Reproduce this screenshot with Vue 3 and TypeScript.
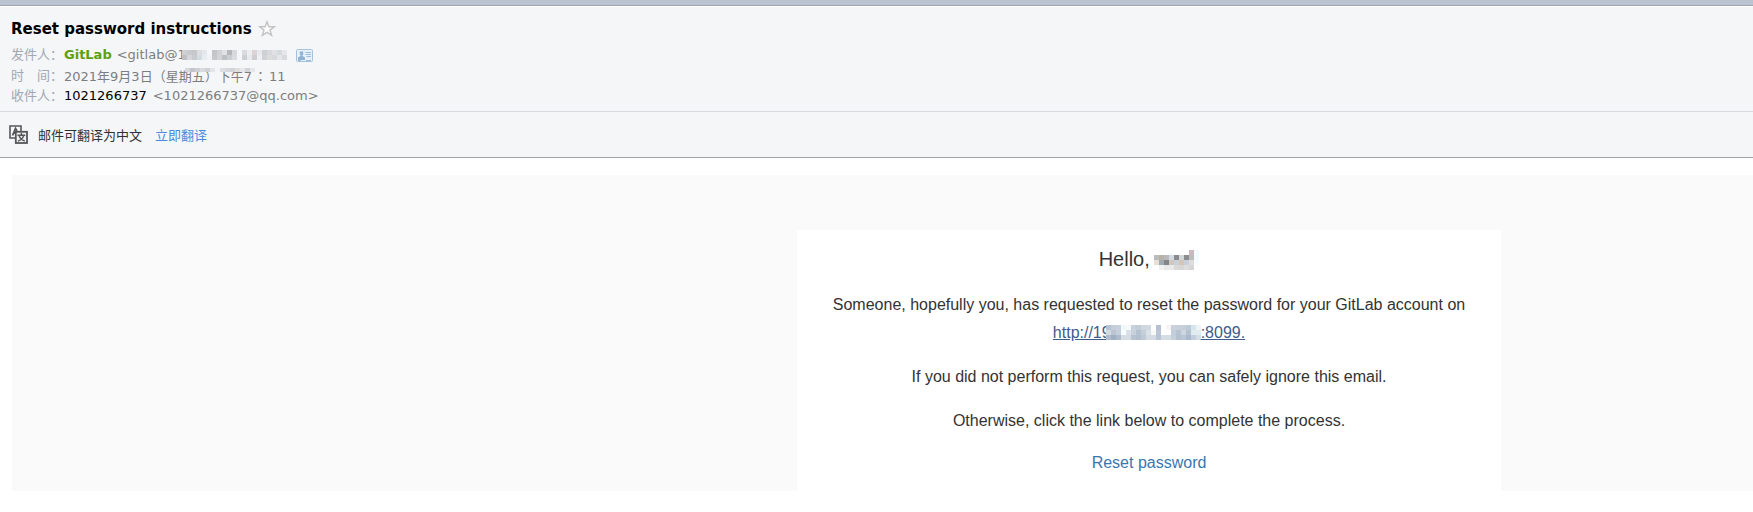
<script setup lang="ts">
interface Row {
  y: number
  start: number
  colors: string[]
}

const addressRows: Row[] = [
  { y: 0, start: 0, colors: ['#cfd0d2', '#c9cacc', '#c6c7c9', '#dcdee0', '#e4e8ec', '#f4f6f9', '#c3c5c7', '#d0d2d4', '#dfe1e3', '#b5b6b8', '#d7dadd', '#f4f6f9', '#d9dbde', '#ebedf0', '#dbd5d5', '#e7e9ec', '#ccd0d3', '#d7d8da', '#dfe1e3', '#d5dadd', '#e6e7ea'] },
  { y: 5, start: 0, colors: ['#c0c1c4', '#d3d6da', '#c8cbcf', '#d4dce3', '#e8edf2', '#f0f2f4', '#c7c8cb', '#d2d4d7', '#bcbfc3', '#cbced1', '#d8dcdf', '#f4f6f9', '#cfcfd1', '#e6e9ed', '#d0cccf', '#eeeff1', '#cfd2d7', '#dcdcdc', '#d7dadd', '#e4e6e9', '#d8dade'] },
]
const dateRows: Row[] = [
  { y: 0, start: 1, colors: ['#d6d8dc', '#c2c5cb', '#cecfd2', '#d8dadd', '#cfd1d4', '#e2e4e7', '#f4f5f7', '#dcdfe2', '#d7d8db', '#d1d4d9', '#e3dddc', '#e6e8eb', '#d2d4d7', '#e5e7ea'] },
]
const nameRows: Row[] = [
  { y: 0, start: 7, colors: ['#cbb8be', '#f4fbff'] },
  { y: 5, start: 0, colors: ['#bcbcbc', '#b9b2a7', '#b9babd', '#d3dce5', '#8b8b8d', '#d1d6da', '#8c8c8f', '#bcbcbd', '#f4fbff'] },
  { y: 10, start: 0, colors: ['#eadfd3', '#9eabb5', '#858588', '#d0c8be', '#c8d0d9', '#d3c6b8', '#c8d0da', '#dedcdd', '#f7fcff'] },
  { y: 15, start: 1, colors: ['#f2f2f2', '#e9e9e9', '#e9e9e9', '#dadada', '#d7d7d7', '#dedede', '#d5d5d5'] },
]
const hostRows: Row[] = [
  { y: 0, start: 0, colors: ['#b7c3d2', '#c3ced9', '#c9d2dc', '#eff8fb', '#f7f8f8', '#c7d0dd', '#c2ccd7', '#d0d7df', '#d0d9e2', '#ffffff', '#b5c0d0', '#ffffff', '#f7f5f3', '#c9d1dc', '#c6cfda', '#c6ced9', '#bdcbd9', '#d4e5ee', '#f0f4f6'] },
  { y: 5, start: 0, colors: ['#d4dae2', '#bac5d1', '#c5cfda', '#f8fdff', '#dae0e8', '#c8d1dc', '#b4c1cf', '#c3ced8', '#dae1e8', '#f8f8f8', '#bac6d3', '#ffffff', '#ffffff', '#c3cedb', '#b7c3d1', '#cdd6e0', '#b6c1d0', '#dfedf3', '#e4ebf0'] },
  { y: 10, start: 0, colors: ['#b0bdcc', '#9fb0c5', '#aebccd', '#d4dce4', '#d5dce3', '#b8c3d0', '#b4bfcf', '#bdc9d5', '#d4dbe2', '#d4dbe3', '#b8c5d4', '#d5dde4', '#d5dce3', '#c5cfda', '#b5c1cf', '#bac6d5', '#aab9ce', '#c2cedb', '#d5dde5'] },
]
</script>

<template>
  <div class="mail">
    <header class="head">
      <div class="title-row">
        <h1>Reset password instructions</h1>
        <button class="star" type="button" aria-label="Star">
          <svg width="18" height="18" viewBox="0 0 18 18">
            <path d="M9 1.8l1.9 5h5.3l-4.2 3.3 1.6 5.3L9 12.3l-4.6 3.1L6 10.1 1.8 6.8h5.3z" fill="#fcfcfc" stroke="#c3c3c3" stroke-width="1.4" />
          </svg>
        </button>
      </div>
      <div class="meta first">
        <span class="label">发件人：</span>
        <b class="sender">GitLab</b>
        <span class="address">&lt;gitlab@1<svg class="mask" width="105" height="10" shape-rendering="crispEdges">
          <template v-for="row in addressRows" :key="row.y">
            <rect v-for="(c, i) in row.colors" :key="i" :x="(row.start + i) * 5" :y="row.y" width="5" height="5" :fill="c" />
          </template>
        </svg></span>
        <button class="contact" type="button" aria-label="Contact card">
          <svg width="17" height="13" viewBox="0 0 17 13">
            <rect x=".5" y=".5" width="16" height="12" rx="1" fill="#e6f0f8" stroke="#a5c2dc" />
            <path d="M3.8 2.5h3.4v3.2H6.5v1.3L9 8.5V11H2V8.5L4.5 7V5.7h-.7z" fill="#8fb3d4" />
            <path d="M9.5 3.5H15M9.5 5.5H15M10.5 7.5H15M2 11.5h3m5 0h5" stroke="#9dbdd9" />
          </svg>
        </button>
      </div>
      <div class="meta second">
        <span class="label">时　间：</span>
        <span class="date">2021年9月3日（星期五）下午7<span class="colon">：</span>11<svg class="date-mask" width="75" height="4" shape-rendering="crispEdges">
          <template v-for="row in dateRows" :key="row.y">
            <rect v-for="(c, i) in row.colors" :key="i" :x="(row.start + i) * 5" :y="row.y" width="5" height="4" :fill="c" />
          </template>
        </svg></span>
      </div>
      <div class="meta third">
        <span class="label">收件人：</span>
        <span class="to">1021266737</span>
        <span>&lt;1021266737@qq.com&gt;</span>
      </div>
    </header>

    <div class="translate">
      <svg width="19" height="19" viewBox="0 0 19 19" fill="none" stroke="#555759">
        <path d="M6 13H1V1h11v5" stroke-width="1.6" />
        <path d="M3.5 10.5L6.5 3.5 8 6M4.5 8H6" stroke-width="1.8" />
        <rect x="6.8" y="6.8" width="11.2" height="11.2" fill="#f0f1f2" stroke-width="1.8" />
        <path d="M12.4 8v2M8.5 10.2h7.8M10 10.5q1.5 4.2 5.8 5.6M14.8 10.5q-1.5 4.2-5.8 5.6" stroke-width="1.4" />
      </svg>
      <span class="hint">邮件可翻译为中文</span>
      <a href="#">立即翻译</a>
    </div>

    <main class="body">
      <div class="canvas">
        <section class="card">
          <h2>Hello, <svg class="inline-mask name" width="45" height="20" shape-rendering="crispEdges">
            <template v-for="row in nameRows" :key="row.y">
              <rect v-for="(c, i) in row.colors" :key="i" :x="(row.start + i) * 5" :y="row.y" width="5" height="5" :fill="c" />
            </template>
          </svg></h2>
          <p>
            Someone, hopefully you, has requested to reset the password for your GitLab account on
            <a class="host" href="#">http://19<svg class="inline-mask" width="95" height="15" shape-rendering="crispEdges">
              <template v-for="row in hostRows" :key="row.y">
                <rect v-for="(c, i) in row.colors" :key="i" :x="(row.start + i) * 5" :y="row.y" width="5" height="5" :fill="c" />
              </template>
            </svg>:8099.</a>
          </p>
          <p>If you did not perform this request, you can safely ignore this email.</p>
          <p>Otherwise, click the link below to complete the process.</p>
          <a class="reset" href="#">Reset password</a>
        </section>
      </div>
    </main>
  </div>
</template>

<style>
body {
  margin: 0;
  background: #fff;
}
</style>

<style scoped>
.mail {
  font-family: "DejaVu Sans", "Noto Sans CJK SC", sans-serif;
  font-size: 13px;
  color: #7c7d80;
  border-top: 5px solid #bcc3d0;
}
.head {
  background: #f4f6f8;
  border-top: 1px solid #a1a5b5;
  border-bottom: 1px solid #d8dadd;
  box-shadow: inset 0 1px #fff;
  padding: 12px 11px 6px;
}
.title-row {
  display: flex;
  align-items: center;
  height: 22px;
  gap: 6px;
}
h1 {
  margin: 0;
  font-size: 15px;
  line-height: 22px;
  color: #000;
}
button {
  display: flex;
  padding: 0;
  border: 0;
  background: none;
  cursor: pointer;
}
.meta {
  display: flex;
  align-items: center;
  height: 20px;
  line-height: 20px;
  white-space: nowrap;
}
.meta.first {
  margin-top: 4px;
  height: 22px;
}
.meta.third {
  height: 19px;
}
.label {
  width: 53px;
  color: #a3a7b0;
}
.sender {
  margin-right: 5px;
  color: #5f9f0c;
}
.to {
  margin-right: 6px;
  color: #000;
}
.address {
  display: flex;
  align-items: center;
}
.mask {
  margin-left: -4px;
}
.contact {
  margin-left: 9px;
}
.date {
  position: relative;
}
.colon {
  margin: 0 2px;
  font-family: "Noto Sans CJK TC", sans-serif;
}
.date-mask {
  position: absolute;
  left: 116px;
  top: 2px;
}
.translate {
  display: flex;
  align-items: center;
  height: 45px;
  padding-left: 9px;
  background: #f4f6f8;
  border-bottom: 1px solid #a0a2a8;
  color: #303133;
}
.hint {
  margin: 0 13px 0 10px;
}
.translate a {
  color: #4a8be0;
  text-decoration: none;
}
.body {
  padding: 17px 0 21px 12px;
}
.canvas {
  display: grid;
  grid-template-columns: 785fr minmax(0, 704px) 252fr;
  padding-top: 55px;
  background: #fafafa;
}
.card {
  grid-column: 2;
  padding: 15px 26px 14px;
  background: #fff;
  color: #333;
  font-family: "Liberation Sans", Arial, sans-serif;
  font-size: 16px;
  line-height: 28px;
  text-align: center;
}
h2 {
  margin: 0 0 18px;
  font-size: 20px;
  font-weight: 400;
  line-height: 28px;
}
p {
  margin: 0 0 16px;
}
.inline-mask {
  margin-left: -5px;
  vertical-align: -2px;
}
.inline-mask.name {
  margin-left: -1px;
  vertical-align: -4px;
}
.host {
  color: #3d5c8c;
}
.reset {
  display: block;
  margin-top: -2px;
  color: #3777b0;
  text-decoration: none;
}
</style>
